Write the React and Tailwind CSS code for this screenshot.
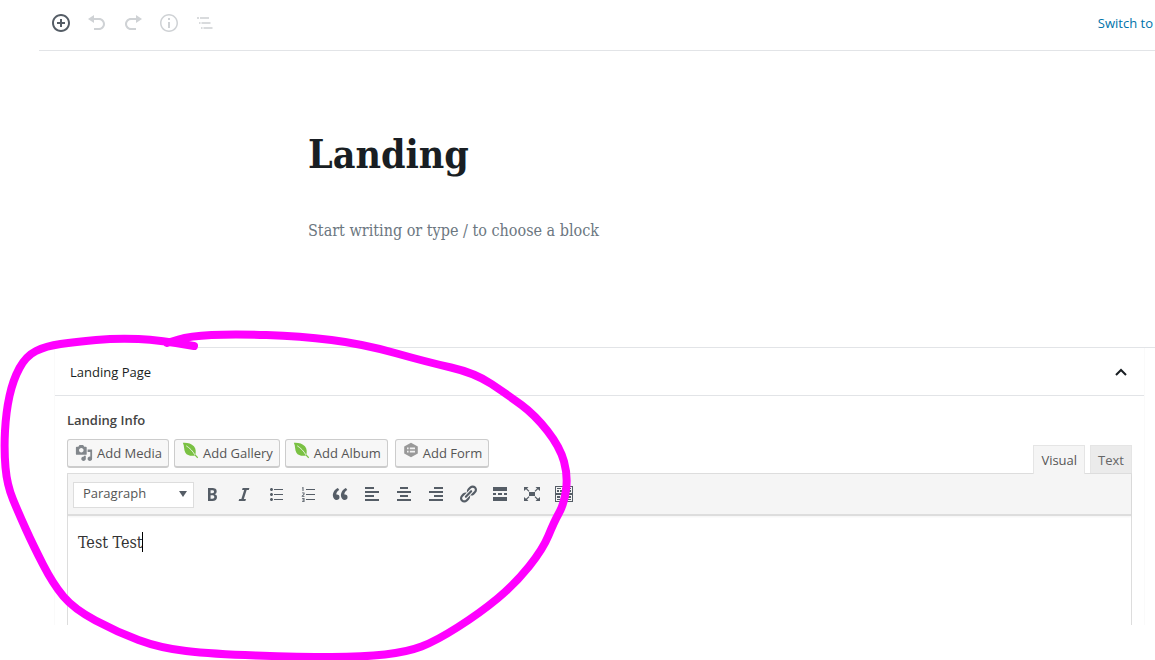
import clsx from 'clsx'

function Icon({ children, className, size = 20 }) {
  return (
    <svg viewBox="0 0 20 20" width={size} height={size} fill="currentColor" className={clsx('shrink-0', className)} aria-hidden="true">
      {children}
    </svg>
  )
}

const headerTools = [
  { name: 'Add block', active: true, icon: <path d="M10 1c-5 0-9 4-9 9s4 9 9 9 9-4 9-9-4-9-9-9zm0 16c-3.9 0-7-3.1-7-7s3.1-7 7-7 7 3.1 7 7-3.1 7-7 7zm1-11H9v3H6v2h3v3h2v-3h3V9h-3V6z" /> },
  { name: 'Undo', icon: <path d="M12 5H7V2L1 6l6 4V7h5c2.2 0 4 1.8 4 4s-1.8 4-4 4H7v2h5c3.3 0 6-2.7 6-6s-2.7-6-6-6z" /> },
  { name: 'Redo', icon: <path d="M8 5h5V2l6 4-6 4V7H8c-2.2 0-4 1.8-4 4s1.8 4 4 4h5v2H8c-3.3 0-6-2.7-6-6s2.7-6 6-6z" /> },
  { name: 'Content structure', icon: <path d="M9 15h2V9H9v6zm1-14c-5 0-9 4-9 9s4 9 9 9 9-4 9-9-4-9-9-9zm0 16.5c-4.1 0-7.5-3.4-7.5-7.5S5.9 2.5 10 2.5s7.5 3.4 7.5 7.5-3.4 7.5-7.5 7.5zM9 7h2V5H9v2z" /> },
  { name: 'Block navigation', icon: <path d="M2 4h2v2H2zM5 4h9v2H5zM4 9h1.500v2H4zM6.500 9h9v2h-9zM6 14h1.500v2H6zM8.500 14h9v2h-9z" opacity=".8" /> },
]

const leaf = (
  <>
    <path d="M1 1c5-.4 10 .8 13 4 2.600 3 2.400 7 1.800 9.600L19 18l-1 1-3-3C10 16.700 6 15.600 4 12.500 2 9.500 3 5 1 1z" fill="#7ac143" />
    <path d="M5 4.500c4 2.500 8 6.500 10 10.500" fill="none" stroke="#f7f7f7" strokeWidth="1" />
  </>
)

const mediaButtons = [
  { name: 'Add Media', size: 18, icon: <path d="M13 11V4c0-.55-.45-1-1-1h-1.670L9 1H5L3.670 3H2c-.55 0-1 .45-1 1v7c0 .55.450 1 1 1h10c.55 0 1-.45 1-1zM7 4.500c1.380 0 2.500 1.120 2.500 2.500S8.380 9.500 7 9.500 4.500 8.380 4.500 7 5.620 4.500 7 4.500zM14 6h5v10.500c0 1.380-1.120 2.500-2.500 2.500S14 17.880 14 16.500s1.120-2.500 2.500-2.500c.17 0 .34.020.5.050V9h-3V6zM10 14.050V13h2v3.500c0 1.380-1.120 2.500-2.500 2.500S7 17.880 7 16.500 8.120 14 9.500 14c.17 0 .34.020.5.050z" /> },
  { name: 'Add Gallery', size: 17, raised: true, icon: leaf },
  { name: 'Add Album', size: 17, raised: true, icon: leaf },
  {
    name: 'Add Form',
    size: 16,
    raised: true,
    icon: (
      <>
        <path d="M10 1l8.500 4.500v9L10 19l-8.500-4.500v-9z" fill="#999" />
        <path d="M5 7h2v2H5zM8.500 7H15v2H8.500zM5 11h2v2H5zM8.500 11H15v2H8.500z" fill="#f1f1f1" />
      </>
    ),
  },
]

const formatTools = [
  { name: 'Bold', icon: <path d="M6 4v13h4.540c1.370 0 2.460-.33 3.260-1 .8-.66 1.200-1.580 1.200-2.770 0-.84-.17-1.510-.51-2.010s-.9-.85-1.670-1.030v-.09c.57-.1 1.020-.4 1.360-.9s.51-1.130.51-1.910c0-1.140-.39-1.980-1.170-2.500C12.750 4.260 11.500 4 9.780 4H6zm2.570 5.150V6.260h1.360c.73 0 1.270.11 1.610.32.34.22.51.58.51 1.070 0 .54-.16.92-.47 1.150s-.82.35-1.510.35h-1.500zm0 2.190h1.600c1.440 0 2.160.53 2.160 1.610 0 .6-.17 1.050-.51 1.340s-.86.43-1.570.43H8.570v-3.380z" /> },
  { name: 'Italic', icon: <path d="M14.780 6h-2.130l-2.800 9h2.120l-.62 2H4.600l.62-2h2.140l2.800-9H8.030l.62-2h6.750z" /> },
  { name: 'Bulleted list', icon: <path d="M5.500 7C4.670 7 4 6.330 4 5.500 4 4.680 4.670 4 5.500 4 6.320 4 7 4.680 7 5.500 7 6.330 6.320 7 5.500 7zM8 5h9v1H8V5zm-2.500 7c-.83 0-1.500-.67-1.500-1.500C4 9.680 4.670 9 5.500 9c.82 0 1.500.68 1.500 1.500 0 .83-.68 1.500-1.500 1.500zM8 10h9v1H8v-1zm-2.500 7c-.83 0-1.500-.67-1.500-1.500 0-.82.67-1.500 1.500-1.500.82 0 1.500.68 1.500 1.500 0 .83-.68 1.500-1.500 1.500zM8 15h9v1H8v-1z" /> },
  { name: 'Numbered list', icon: <path d="M4 3.500L5.500 3v4h-1V4.200H4zM8 5h9v1H8zM4 8.500h2.500v2L5 12h1.500v.8H3.700V12l1.800-1.800v-.9H4zM8 10h9v1H8zM4 14h2.500v4H4v-.8h1.600v-.8H4.500v-.8h1.100v-.8H4zM8 15h9v1H8z" /> },
  { name: 'Blockquote', icon: <path d="M9.490 13.220c0-.74-.2-1.380-.61-1.900-.62-.78-1.830-.88-2.530-.72-.29-1.650 1.110-3.750 2.920-4.650L7.880 4c-2.730 1.300-5.420 4.280-4.960 8.050C3.210 14.430 4.590 16 6.540 16c.85 0 1.560-.25 2.120-.75s.83-1.180.83-2.030zm8.050 0c0-.74-.2-1.380-.61-1.900-.63-.78-1.830-.88-2.530-.72-.29-1.650 1.110-3.750 2.920-4.650L15.930 4c-2.730 1.300-5.410 4.280-4.950 8.050.29 2.380 1.660 3.950 3.610 3.950.85 0 1.560-.25 2.120-.75s.83-1.180.83-2.030z" /> },
  { name: 'Align left', icon: <path d="M12 5V3H3v2h9zm5 4V7H3v2h14zm-5 4v-2H3v2h9zm5 4v-2H3v2h14z" /> },
  { name: 'Align center', icon: <path d="M14 5V3H6v2h8zm3 4V7H3v2h14zm-3 4v-2H6v2h8zm3 4v-2H3v2h14z" /> },
  { name: 'Align right', icon: <path d="M17 5V3H8v2h9zm0 4V7H3v2h14zm0 4v-2H8v2h9zm0 4v-2H3v2h14z" /> },
  { name: 'Insert link', icon: <path d="M17.740 2.760c1.680 1.690 1.680 4.410 0 6.100l-1.530 1.520c-1.120 1.120-2.700 1.470-4.140 1.090l2.620-2.610.76-.77.76-.76c.84-.84.84-2.200 0-3.040-.84-.85-2.200-.85-3.040 0l-.77.76-3.380 3.380c-.37-1.440-.02-3.020 1.100-4.140l1.520-1.530c1.690-1.680 4.420-1.680 6.100 0zM8.590 13.430l5.340-5.340c.42-.42.42-1.100 0-1.520-.44-.43-1.130-.39-1.530 0l-5.330 5.340c-.42.42-.42 1.100 0 1.520.44.43 1.130.39 1.520 0zm-.76 2.290l4.140-4.150c.38 1.440.03 3.020-1.090 4.140l-1.520 1.530c-1.690 1.680-4.410 1.680-6.100 0-1.680-1.680-1.680-4.420 0-6.100l1.530-1.520c1.120-1.120 2.700-1.470 4.140-1.100l-4.140 4.150c-.85.84-.85 2.200 0 3.050.84.84 2.200.84 3.040 0z" /> },
  { name: 'Read more', icon: <path d="M17 7V3H3v4h14zM6 11V9H3v2h3zm6 0V9H8v2h4zm5 0V9h-3v2h3zm0 6v-4H3v4h14z" /> },
  { name: 'Fullscreen', icon: <path d="M7 8h6v4H7zM2 3h4.500L5 4.500 7.500 7l-.8.800L4 5.300 2 7zM18 3v4l-2-1.700-2.700 2.500-.8-.8L15 4.500 13.500 3zM2 17v-4l2 1.700 2.700-2.500.8.800L5 15.500 6.500 17zM18 17h-4.500l1.500-1.500-2.500-2.500.8-.8 2.700 2.500 2-1.700z" /> },
  { name: 'Toolbar toggle', icon: <path d="M1 2h18v16H1zm1 1v6h16V3zm0 8v6h16v-6zM3 4h4v1H3zm5 0h4v1H8zm5 0h4v1h-4zM3 6h2v2H3zm3 0h3v2H6zm4 0h3v2h-3zm4 0h3v2h-3zM3 12h3v2H3zm4 0h3v2H7zm4 0h2v2h-2zm3 0h3v2h-3zM3 15h4v1H3zm5 0h4v1H8zm5 0h4v1h-4z" fillRule="evenodd" /> },
]

const markerPoints = [
  [194, 346], [160, 340], [117, 338], [75, 342], [46, 346], [26, 356], [13, 380], [6, 412], [4, 450], [7, 485],
  [19, 514], [33, 545], [53, 584], [74, 609], [117, 632], [160, 648], [212, 654], [300, 657], [363, 657], [407, 652],
  [436, 641], [480, 613], [515, 584], [543, 549], [554, 522], [564, 504], [568, 476], [560, 447], [535, 415],
  [508, 395], [475, 373], [427, 362], [363, 344], [300, 336], [233, 334], [190, 336], [167, 343],
]

// quadratic segments through the midpoints keep the line smooth
function smoothPath(points) {
  let d = `M${points[0].join(' ')}`
  for (let i = 1; i < points.length - 1; i++) {
    const [x, y] = points[i]
    const [nx, ny] = points[i + 1]
    d += `Q${x} ${y} ${(x + nx) / 2} ${(y + ny) / 2}`
  }
  return `${d}L${points[points.length - 1].join(' ')}`
}

function Header() {
  return (
    <header className="ml-[39px] flex h-[51px] items-center justify-between border-b border-[#e2e4e7] pr-[2px] pb-1 pl-3">
      <div className="flex gap-4">
        {headerTools.map((tool) => (
          <button key={tool.name} type="button" aria-label={tool.name} className={clsx(tool.active ? 'text-[#555d66]' : 'text-[#cfd2d5]')}>
            <Icon>{tool.icon}</Icon>
          </button>
        ))}
      </div>
      <a href="#draft" className="pt-0.5 text-[13px] text-[#0073aa]">Switch to</a>
    </header>
  )
}

function ClassicEditor() {
  return (
    <div className="px-3 pt-[15px]">
      <label htmlFor="landing-info" className="block text-[13px] leading-[18px] font-semibold text-[#444]">Landing Info</label>

      <div className="flex items-end justify-between pt-[10px]">
        <div className="flex gap-[5px] pb-[5px]">
          {mediaButtons.map((button) => (
            <button key={button.name} type="button" className="flex h-[29px] items-center gap-1 rounded-[3px] border border-b-2 border-[#ccc] bg-[#f7f7f7] pr-1.5 pl-[7px] text-[13px] text-[#555] last:ml-0.5">
              <Icon size={button.size} className={clsx('text-[#82878c]', button.raised && 'mt-0.5 self-start')}>{button.icon}</Icon>
              <span className="pt-px">{button.name}</span>
            </button>
          ))}
        </div>
        <div className="flex gap-[5px] text-[13px] leading-[18px] text-[#555]">
          <button type="button" className="relative -mb-px h-[29px] border border-b-0 border-[#e5e5e5] bg-[#f5f5f5] px-[7px]">Visual</button>
          <button type="button" className="h-7 border border-b-0 border-[#e5e5e5] bg-[#ebebeb] px-[7px] text-[#666]">Text</button>
        </div>
      </div>

      <div className="border border-b-0 border-[#ddd]">
        <div className="flex h-[42px] items-center border-b-2 border-[#ddd] bg-[#f5f5f5] pl-[5px] shadow-xs">
          <div className="relative mr-2">
            <select aria-label="Format" className="h-[26px] w-[121px] appearance-none border border-[#ddd] bg-white pb-0.5 pl-[9px] text-[13px] text-[#555]">
              <option>Paragraph</option>
            </select>
            <svg viewBox="0 0 8 6" width="8" height="6" className="pointer-events-none absolute top-[11px] right-[7px]" fill="#555d66"><path d="M0 0h8L4 6z" /></svg>
          </div>
          <div className="flex gap-3 text-[#555d66]">
            {formatTools.map((tool) => (
              <button key={tool.name} type="button" aria-label={tool.name}>
                <Icon>{tool.icon}</Icon>
              </button>
            ))}
          </div>
        </div>
        <div className="relative">
          <textarea id="landing-info" defaultValue="Test Test" className="block h-[109px] w-full resize-none px-[10px] py-4 font-['DejaVu_Serif_Condensed','DejaVu_Serif',serif] text-[16px] leading-[22px] text-[#333] outline-none" />
          <span className="absolute top-4 left-[74px] h-5 w-px bg-black" />
        </div>
      </div>
    </div>
  )
}

export default function App() {
  return (
    <div className="relative min-h-screen overflow-hidden bg-white font-['Open_Sans',sans-serif]">
      <Header />
      <main>
        <section className="ml-[308px] h-[296px] pt-[74px] font-['DejaVu_Serif_Condensed','DejaVu_Serif',serif]">
          <h1 className="text-[39px] leading-[58px] font-bold text-[#191e23]">Landing</h1>
          <p className="pt-9 text-[16px] leading-[24px] text-[#6c7781]">Start writing or type / to choose a block</p>
        </section>

        <section className="ml-[54px]">
          <div className="ml-36 border-t border-[#e2e4e7]" />
          <div className="mr-[10px] border-x border-[#fafafa]">
            <button type="button" className="flex h-12 w-full items-center justify-between border-b border-[#e2e4e7] pr-4 pl-[15px] text-[13px] font-medium text-[#191e23]">
              <span className="pt-0.5">Landing Page</span>
              <svg viewBox="0 0 14 8" width="14" height="8" fill="none" stroke="#191e23" strokeWidth="2"><path d="M2 7l5-5 5 5" /></svg>
            </button>
            <ClassicEditor />
          </div>
        </section>
      </main>

      {/* Marker stroke over the metabox */}
      <svg width="580" height="340" viewBox="0 320 580 340" className="pointer-events-none absolute top-[320px] left-0" fill="none" stroke="#f0f" strokeWidth="8" strokeLinecap="round" strokeLinejoin="round">
        <path d={smoothPath(markerPoints)} />
      </svg>
    </div>
  )
}
